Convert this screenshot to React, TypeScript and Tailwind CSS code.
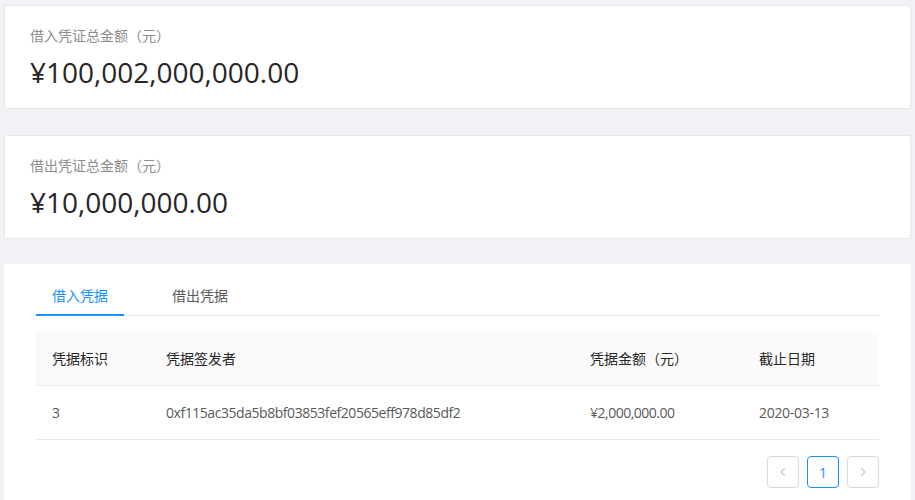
import React from "react";

const FONT = { fontFamily: '"Open Sans", "Noto Sans CJK SC", sans-serif' };

function StatCard({ label, value, className }: { label: string; value: string; className?: string }) {
  return (
    <div className={"h-[104px] bg-white border border-[#e8e8e8] rounded-[2px] pl-[25px] pt-[19px] " + (className ?? "")}>
      <div className="text-[14px] leading-[22px] text-[#8c8c8c]">{label}</div>
      <div className="mt-[7px] text-[28px] leading-[36px] text-[#262626]">{value}</div>
    </div>
  );
}

function Chevron({ dir }: { dir: "left" | "right" }) {
  return (
    <svg width="12" height="12" viewBox="0 0 12 12" fill="none">
      {dir === "left" ? (
        <path d="M7.5 2.5L4 6l3.5 3.5" stroke="#c4c4c4" strokeWidth="1.1" strokeLinecap="round" strokeLinejoin="round" />
      ) : (
        <path d="M4.5 2.5L8 6l-3.5 3.5" stroke="#c4c4c4" strokeWidth="1.1" strokeLinecap="round" strokeLinejoin="round" />
      )}
    </svg>
  );
}

export default function App() {
  return (
    <div style={FONT} className="min-h-[500px] bg-[#f0f2f5] px-[4px] pt-[5px] overflow-hidden">
      <StatCard label="借入凭证总金额（元）" value="¥100,002,000,000.00" />
      <StatCard label="借出凭证总金额（元）" value="¥10,000,000.00" className="mt-[26px]" />

      <div className="mt-[25px] bg-white rounded-[2px] px-[32px] pt-[12px] pb-[40px]">
        {/* Tabs */}
        <div className="flex border-b border-[#e8e8e8]">
          <div className="relative px-4 pt-[9px] pb-[8px] text-[14px] leading-[22px] text-[#1890ff]">
            借入凭据
            <div className="absolute left-0 right-0 bottom-[-1px] h-[2px] bg-[#1890ff]" />
          </div>
          <div className="ml-[32px] px-4 pt-[9px] pb-[8px] text-[14px] leading-[22px] text-[#595959]">
            借出凭据
          </div>
        </div>

        {/* Table */}
        <div className="mt-[16px] text-[14px]">
          <div className="grid grid-cols-[114px_424px_169px_136px] bg-[#fafafa] rounded-t-[4px] border-b border-[#e8e8e8] text-[#262626]">
            <div className="px-4 py-4 leading-[21px]">凭据标识</div>
            <div className="px-4 py-4 leading-[21px]">凭据签发者</div>
            <div className="px-4 py-4 leading-[21px]">凭据金额（元）</div>
            <div className="px-4 py-4 leading-[21px]">截止日期</div>
          </div>
          <div className="grid grid-cols-[114px_424px_169px_136px] border-b border-[#e8e8e8] text-[#595959]">
            <div className="px-4 py-4 leading-[21px]">3</div>
            <div className="px-4 py-4 leading-[21px] tracking-[-0.45px]">0xf115ac35da5b8bf03853fef20565eff978d85df2</div>
            <div className="px-4 py-4 leading-[21px] tracking-[-0.5px]">¥2,000,000.00</div>
            <div className="px-4 py-4 leading-[21px] tracking-[-0.3px]">2020-03-13</div>
          </div>
        </div>

        {/* Pagination */}
        <div className="mt-[16px] flex justify-end gap-[8px]">
          <div className="w-[32px] h-[32px] rounded-[4px] border border-[#d9d9d9] flex items-center justify-center">
            <Chevron dir="left" />
          </div>
          <div className="w-[32px] h-[32px] rounded-[4px] border border-[#1890ff] flex items-center justify-center text-[14px] text-[#1890ff]">
            1
          </div>
          <div className="w-[32px] h-[32px] rounded-[4px] border border-[#d9d9d9] flex items-center justify-center">
            <Chevron dir="right" />
          </div>
        </div>
      </div>
    </div>
  );
}
